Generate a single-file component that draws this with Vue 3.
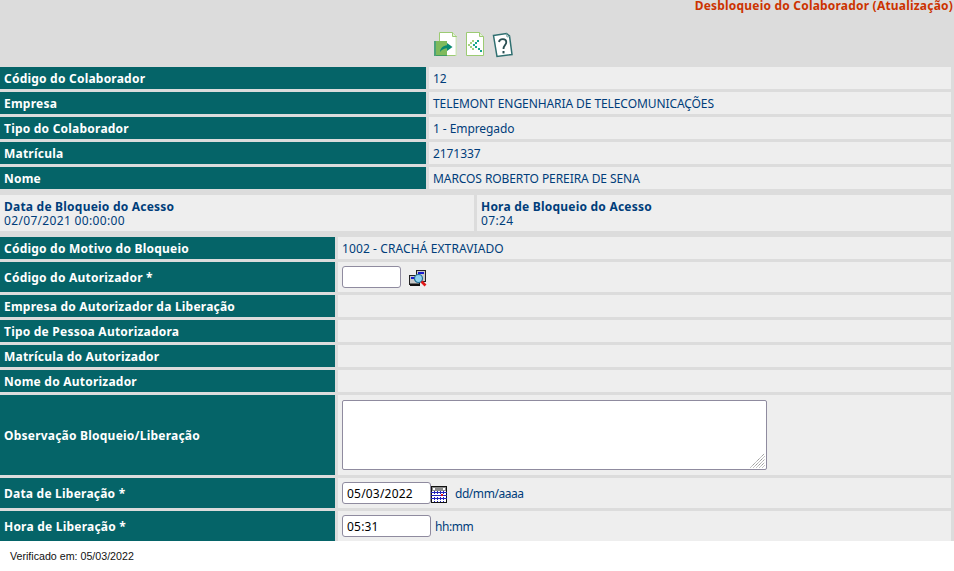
<script setup>
const topRows = [
  ['Código do Colaborador', '12'],
  ['Empresa', 'TELEMONT ENGENHARIA DE TELECOMUNICAÇÕES'],
  ['Tipo do Colaborador', '1 - Empregado'],
  ['Matrícula', '2171337'],
  ['Nome', 'MARCOS ROBERTO PEREIRA DE SENA'],
]
const emptyRows = ['Empresa do Autorizador da Liberação', 'Tipo de Pessoa Autorizadora', 'Matrícula do Autorizador', 'Nome do Autorizador']
</script>

<template>
  <div class="page">
    <div class="sheet">
      <h1 class="title">Desbloqueio do Colaborador (Atualização)</h1>
      <div class="toolbar">
        <svg width="25" height="25" viewBox="0 0 25 25">
          <path d="M5.5 0.5H18.5L22.5 4.5V23.5H5.5Z" fill="#fff" stroke="#9ccb73"/>
          <path d="M18.5 0.5V4.5H22.5" fill="#e4f0d8" stroke="#9ccb73"/>
          <path d="M23 5V24H21.5V5Z" fill="#cfe3bd"/>
          <rect x="0" y="9" width="13" height="15" fill="#7fba5c"/>
          <rect x="0" y="9" width="2" height="15" fill="#4ea27a"/>
          <path d="M2 23H13V24H2Z" fill="#3f9d62"/>
          <path d="M6 20C6.5 16 9 13.5 13 13.2V11L18.5 15L13 19V16.3C10.5 16.3 8 17.5 6 20Z" fill="#0a8a72"/>
        </svg>
        <svg width="21" height="25" viewBox="0 0 21 25">
          <path d="M1.5 0.5H14.5L18.5 4.5V23.5H1.5Z" fill="#fff" stroke="#9ccb73"/>
          <path d="M14.5 0.5V4.5H18.5" fill="#e4f0d8" stroke="#9ccb73"/>
          <g fill="#a6d17f">
            <rect x="3" y="12" width="2" height="2"/><rect x="5" y="10" width="2" height="2"/><rect x="5" y="14" width="2" height="2"/><rect x="7" y="8" width="2" height="2"/><rect x="7" y="16" width="2" height="2"/>
          </g>
          <g fill="#1aa58c">
            <rect x="8" y="12" width="2" height="2"/><rect x="10" y="10" width="2" height="2"/><rect x="10" y="14" width="2" height="2"/><rect x="12" y="8" width="2" height="2"/><rect x="13" y="16" width="2" height="2"/><rect x="15" y="18" width="2" height="2"/>
          </g>
        </svg>
        <svg width="22" height="26" viewBox="0 0 22 26">
          <path d="M1.5 3.5L14.5 1.5L17.5 4L20 22.5L5 24.5Z" fill="#fff" stroke="#2f6f70" stroke-width="1.5"/>
          <path d="M14.5 1.5L15 5L17.5 4.5" fill="none" stroke="#7aa5a5"/>
          <path d="M7 10C7.5 6.5 14 6 14.3 10C14.5 13 11.3 13.3 11.5 17" fill="none" stroke="#2a4f52" stroke-width="1.8"/>
          <rect x="10.5" y="19" width="2" height="2.4" fill="#2a4f52"/>
        </svg>
      </div>

      <section class="grid wide">
        <template v-for="row in topRows" :key="row[0]">
          <div class="label">{{ row[0] }}</div>
          <div class="value">{{ row[1] }}</div>
        </template>
      </section>

      <section class="dates">
        <div class="date-cell"><strong>Data de Bloqueio do Acesso</strong><span>02/07/2021 00:00:00</span></div>
        <div class="date-cell"><strong>Hora de Bloqueio do Acesso</strong><span>07:24</span></div>
      </section>

      <section class="grid narrow">
        <div class="label">Código do Motivo do Bloqueio</div>
        <div class="value motive">1002 - CRACHÁ EXTRAVIADO</div>

        <div class="label tall">Código do Autorizador *</div>
        <div class="value tall">
          <input class="field code" type="text" />
          <svg class="lookup" width="18" height="17" viewBox="0 0 18 17">
            <rect x="7.5" y="0.5" width="9" height="11" fill="#c8c8c8" stroke="#222"/>
            <rect x="9" y="2" width="6" height="2" fill="#1a1ad0"/>
            <rect x="0.5" y="5.5" width="10" height="9" fill="#c8c8c8" stroke="#222"/>
            <rect x="2" y="7" width="7" height="2" fill="#1a1ad0"/>
            <path d="M1 13.5H11V16H1Z" fill="#111"/>
            <circle cx="9.5" cy="8.5" r="4" fill="#8fd0ee" stroke="#1f6d94" stroke-width="1.2"/>
            <path d="M12.5 11.5L16.5 15.5" stroke="#e01818" stroke-width="2.6"/>
          </svg>
        </div>

        <template v-for="label in emptyRows" :key="label">
          <div class="label">{{ label }}</div>
          <div class="value"></div>
        </template>

        <div class="label obs">Observação Bloqueio/Liberação</div>
        <div class="value obs">
          <div class="notes-wrap">
            <textarea class="field notes"></textarea>
            <svg class="grip" width="15" height="15" viewBox="0 0 15 15">
              <path d="M0.5 14.5L14.5 0.5M3.5 14.5L14.5 3.5M6.5 14.5L14.5 6.5M9.5 14.5L14.5 9.5M12.5 14.5L14.5 12.5" stroke="#8b8b8b" stroke-width="1" stroke-dasharray="1.2 0.6"/>
            </svg>
          </div>
        </div>

        <div class="label tall">Data de Liberação *</div>
        <div class="value tall">
          <input class="field date" type="text" value="05/03/2022" />
          <svg class="calendar" width="16" height="17" viewBox="0 0 16 17">
            <rect x="0.5" y="0.5" width="15" height="16" fill="#fff" stroke="#111"/>
            <rect x="1" y="1" width="14" height="4" fill="#8a8a8a"/>
            <rect x="2" y="2" width="2" height="2" fill="#fff"/>
            <rect x="12" y="2" width="2" height="2" fill="#fff"/>
            <path d="M0 6.5H16M0 9.5H16M0 12.5H16" stroke="#2222bb"/>
            <path d="M3.5 5V16M6.5 5V16M9.5 5V16M12.5 5V16" stroke="#2222bb" stroke-dasharray="1 1"/>
            <rect x="10" y="8" width="2" height="2" fill="#e01818"/>
          </svg>
          <span class="hint far">dd/mm/aaaa</span>
        </div>

        <div class="label tall">Hora de Liberação *</div>
        <div class="value tall">
          <input class="field date" type="text" value="05:31" />
          <span class="hint">hh:mm</span>
        </div>
      </section>
    </div>
    <footer class="footer">Verificado em: 05/03/2022</footer>
  </div>
</template>

<style>
html, body { margin: 0; background: #fff; }
</style>

<style scoped>
.page {
  width: 954px;
  height: 571px;
  overflow: hidden;
  font-family: "Noto Sans", sans-serif;
  font-size: 12px;
}
.sheet {
  height: 541px;
  background: #dcdcdc;
  padding-right: 3px;
  box-sizing: border-box;
  overflow: hidden;
}
.title {
  margin: 0 -2px 0 0;
  height: 12px;
  line-height: 12px;
  text-align: right;
  font-size: 12px;
  font-weight: 700;
  letter-spacing: 0.2px;
  color: #cc3300;
}
.toolbar {
  height: 55px;
  box-sizing: border-box;
  padding: 20px 0 0 434px;
  display: flex;
  gap: 6px;
  align-items: flex-start;
}
.grid {
  display: grid;
  gap: 3px;
  grid-auto-rows: 22px;
}
.wide { grid-template-columns: 426px 1fr; }
.narrow { grid-template-columns: 335px 1fr; }
.label {
  background: #056468;
  color: #fff;
  font-weight: 700;
  letter-spacing: 0.22px;
  padding-left: 4px;
  display: flex;
  align-items: center;
}
.value {
  background: #eeeeee;
  color: #003d7a;
  letter-spacing: -0.08px;
  padding-left: 4px;
  display: flex;
  align-items: center;
}
.value.motive { letter-spacing: 0.1px; }
.tall { height: 30px; }
.obs { height: 80px; }
.narrow .tall, .narrow .obs { align-self: start; }
.narrow { grid-template-rows: 22px 30px 22px 22px 22px 22px 80px 30px 30px; }
.dates {
  display: grid;
  grid-template-columns: 474px 1fr;
  gap: 3px;
  margin: 6px 0;
}
.date-cell {
  height: 36px;
  box-sizing: border-box;
  padding: 5px 4px 0;
  background: #eeeeee;
  color: #003d7a;
  line-height: 14px;
  display: flex;
  flex-direction: column;
}
.date-cell strong { font-weight: 700; letter-spacing: 0.22px; }
.date-cell span { letter-spacing: 0.33px; }
.field {
  box-sizing: border-box;
  margin: 0;
  background: #fff;
  border: 1px solid #8f8b9f;
  border-radius: 3px;
  font-family: "Noto Sans", sans-serif;
  font-size: 12px;
  letter-spacing: 0.2px;
  color: #000;
  padding: 0 4px;
  outline: none;
}
.code { width: 59px; height: 22px; }
.date { width: 89px; height: 22px; }
.notes-wrap { position: relative; width: 425px; height: 70px; }
.notes { width: 425px; height: 70px; display: block; border-radius: 2px; resize: none; }
.grip { position: absolute; right: 2px; bottom: 2px; pointer-events: none; }
.lookup { margin: 3px 0 0 8px; }
.calendar { margin: 2px 0 0 0; }
.hint { margin-left: 4px; letter-spacing: -0.45px; }
.hint.far { margin-left: 8px; }
.footer {
  height: 30px;
  box-sizing: border-box;
  padding: 10px 0 0 10px;
  font-family: "Liberation Sans", sans-serif;
  font-size: 10.67px;
  line-height: 11px;
  color: #111;
}
</style>
